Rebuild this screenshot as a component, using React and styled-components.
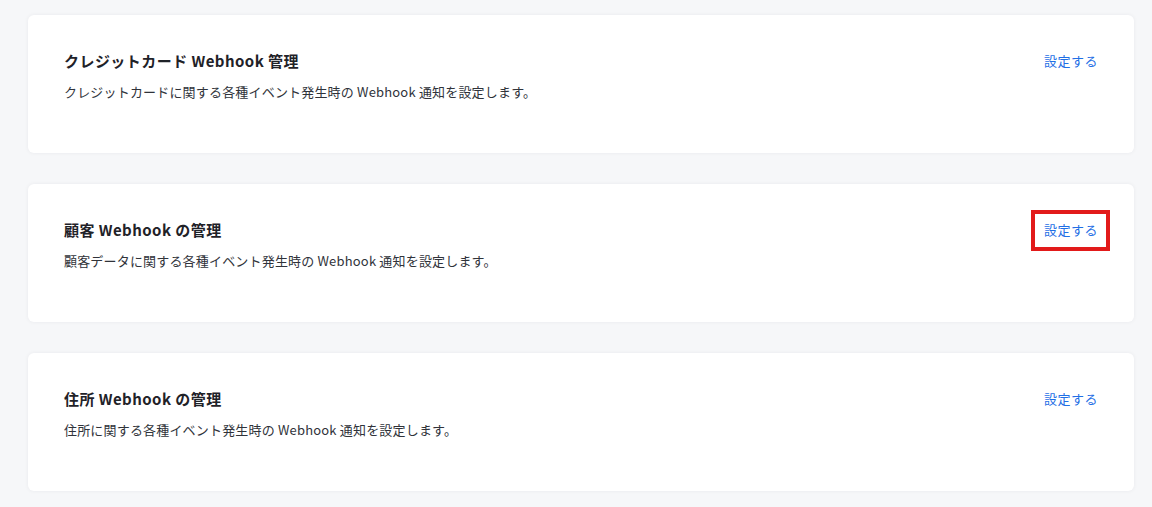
import React from "react";
import styled, { createGlobalStyle } from "styled-components";

const Global = createGlobalStyle`
  html, body { margin: 0; padding: 0; background: #f6f7f9; }
  body { font-family: "Noto Sans CJK JP", "Noto Sans", sans-serif; -webkit-font-smoothing: antialiased; }
`;

const Page = styled.div`
  display: flex;
  flex-direction: column;
  gap: 31px;
  padding: 15px 18px 15px 28px;
`;

const Card = styled.section`
  background: #fff;
  border-radius: 6px;
  box-shadow: 0 0 4px rgba(20, 30, 50, 0.06);
  padding: 35px 36px 0 36px;
  height: 138px;
  box-sizing: border-box;
`;

const Header = styled.div`
  display: flex;
  align-items: center;
  justify-content: space-between;
`;

const Title = styled.h2`
  margin: 0;
  font-size: 15px;
  font-weight: 700;
  line-height: 22px;
  letter-spacing: 0.45px;
  color: #1f2228;
`;

const Desc = styled.p`
  margin: 10px 0 0;
  font-size: 13px;
  line-height: 20px;
  letter-spacing: 0.18px;
  color: #30333a;
`;

const Link = styled.a`
  position: relative;
  font-size: 13px;
  line-height: 20px;
  letter-spacing: 0.5px;
  color: #1f6fe5;
  text-decoration: none;
  cursor: pointer;

  &::after {
    content: "";
    display: ${(p) => (p.$highlight ? "block" : "none")};
    position: absolute;
    top: -10px;
    bottom: -11px;
    left: -13px;
    right: -12px;
    border: 4px solid #e21a1a;
  }
`;

const items = [
  {
    title: "クレジットカード Webhook 管理",
    desc: "クレジットカードに関する各種イベント発生時の Webhook 通知を設定します。",
  },
  {
    title: "顧客 Webhook の管理",
    desc: "顧客データに関する各種イベント発生時の Webhook 通知を設定します。",
    highlight: true,
  },
  {
    title: "住所 Webhook の管理",
    desc: "住所に関する各種イベント発生時の Webhook 通知を設定します。",
  },
];

export default function App() {
  return (
    <>
      <Global />
      <Page>
        {items.map((it) => (
          <Card key={it.title}>
            <Header>
              <Title>{it.title}</Title>
              <Link $highlight={it.highlight}>設定する</Link>
            </Header>
            <Desc>{it.desc}</Desc>
          </Card>
        ))}
      </Page>
    </>
  );
}
